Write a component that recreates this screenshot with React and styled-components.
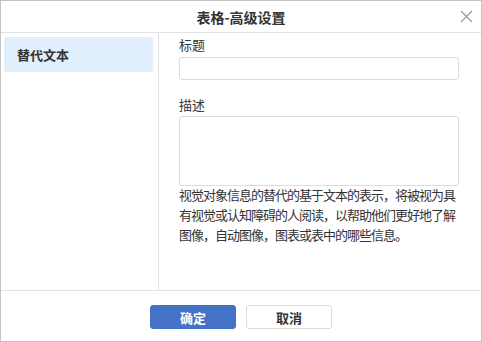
import styled, { createGlobalStyle } from 'styled-components'

const GlobalStyle = createGlobalStyle`
  html, body {
    margin: 0;
    padding: 0;
    background: #fff;
  }
  * {
    box-sizing: border-box;
  }
`

const font = `'Noto Sans CJK SC', 'Noto Sans', sans-serif`

const hintLines = [
  '视觉对象信息的替代的基于文本的表示，将被视为具',
  '有视觉或认知障碍的人阅读，以帮助他们更好地了解',
  '图像，自动图像，图表或表中的哪些信息。',
]

const DialogDiv = styled.div`
  width: 482px;
  height: 342px;
  border: 1px solid #c4c4c4;
  display: flex;
  flex-direction: column;
  font-family: ${font};
  color: #333;
  background: #fff;
`

const HeaderDiv = styled.div`
  height: 32px;
  flex: none;
  border-bottom: 1px solid #e2e2e2;
  display: flex;
  align-items: center;
  justify-content: center;
  position: relative;
`

const Title = styled.div`
  font-size: 14px;
  font-weight: 700;
  color: #333;
  margin-top: 1px;
`

const CloseButton = styled.button`
  position: absolute;
  right: 8px;
  top: 9px;
  width: 13px;
  height: 13px;
  padding: 0;
  border: none;
  background: none;
  display: flex;
`

const BodyDiv = styled.div`
  flex: 1;
  display: flex;
  min-height: 0;
`

const SidebarDiv = styled.div`
  width: 158px;
  flex: none;
  border-right: 1px solid #e2e2e2;
  padding: 4px 5px 0 3px;
`

const NavItem = styled.div`
  height: 35px;
  border-radius: 3px;
  padding-left: 13px;
  display: flex;
  align-items: center;
  font-size: 13px;
  font-weight: 700;
  color: #333;
  background: ${(props) => (props.active ? '#e1eefb' : 'transparent')};
`

const MainDiv = styled.div`
  flex: 1;
  min-width: 0;
  padding: 3px 22px 0 20px;
  display: flex;
  flex-direction: column;
`

const Label = styled.div`
  font-size: 13px;
  line-height: 18px;
  color: #333;
  margin-bottom: ${(props) => props.gap}px;
`

const TextInput = styled.input`
  height: 23px;
  flex: none;
  border: 1px solid #dcdcdc;
  border-radius: 3px;
  outline: none;
  padding: 0 6px;
  margin-bottom: 16px;
`

const TextArea = styled.textarea`
  height: 70px;
  flex: none;
  border: 1px solid #dcdcdc;
  border-radius: 3px;
  outline: none;
  resize: none;
  padding: 4px 6px;
  margin: 0;
  font-family: ${font};
`

const Hint = styled.div`
  font-size: 13px;
  letter-spacing: -1px;
  line-height: 20px;
  color: #333;
  margin-top: -1px;
`

const HintLine = styled.div`
  white-space: nowrap;
`

const FooterDiv = styled.div`
  height: 51px;
  flex: none;
  border-top: 1px solid #e2e2e2;
  display: flex;
  align-items: center;
  justify-content: center;
  gap: 10px;
  padding-top: 2px;
`

const Button = styled.button`
  width: 86px;
  height: 24px;
  border-radius: 3px;
  font-family: ${font};
  font-size: 13px;
  font-weight: 700;
  cursor: pointer;
  border: 1px solid ${(props) => (props.primary ? '#4472c6' : '#dcdcdc')};
  background: ${(props) => (props.primary ? '#4472c6' : '#fff')};
  color: ${(props) => (props.primary ? '#fff' : '#333')};
`

export default function App() {
  return (
    <>
      <GlobalStyle />
      <DialogDiv>
        <HeaderDiv>
          <Title>表格-高级设置</Title>
          <CloseButton>
            <svg width="13" height="13" viewBox="0 0 13 13">
              <path d="M1 1 L12 12 M12 1 L1 12" stroke="#999" strokeWidth="1.2" fill="none" />
            </svg>
          </CloseButton>
        </HeaderDiv>
        <BodyDiv>
          <SidebarDiv>
            <NavItem active>替代文本</NavItem>
          </SidebarDiv>
          <MainDiv>
            <Label gap={3}>标题</Label>
            <TextInput />
            <Label gap={2}>描述</Label>
            <TextArea />
            <Hint>
              {hintLines.map((line, i) => (
                <HintLine key={'hint-' + i}>{line}</HintLine>
              ))}
            </Hint>
          </MainDiv>
        </BodyDiv>
        <FooterDiv>
          <Button primary>确定</Button>
          <Button>取消</Button>
        </FooterDiv>
      </DialogDiv>
    </>
  )
}
